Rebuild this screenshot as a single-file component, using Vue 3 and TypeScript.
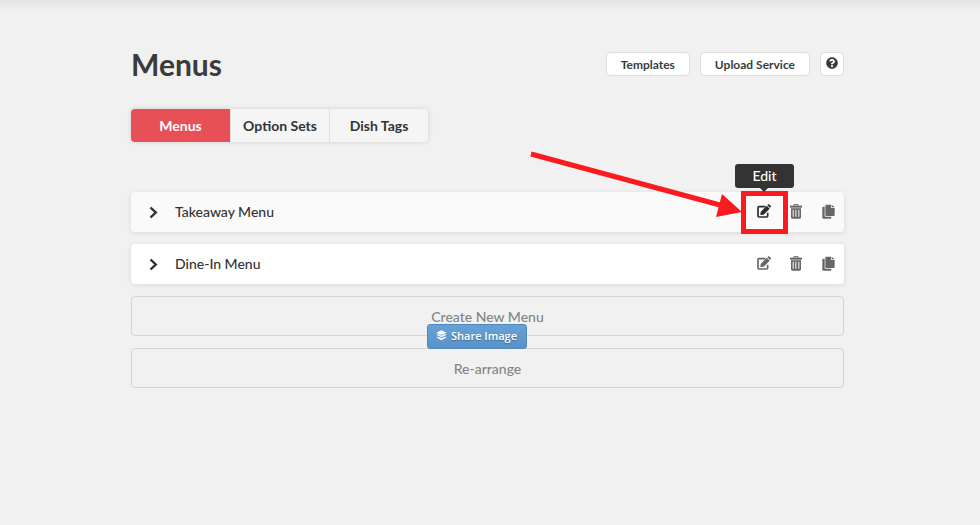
<script setup lang="ts">
import { ref } from 'vue'

interface Menu {
  id: number
  name: string
  active: boolean
}

const tabs: string[] = ['Menus', 'Option Sets', 'Dish Tags']
const currentTab = ref('Menus')
const menus: Menu[] = [
  { id: 1, name: 'Takeaway Menu', active: true },
  { id: 2, name: 'Dine-In Menu', active: false },
]
</script>

<template>
  <main class="page">
    <header class="header">
      <h1>Menus</h1>
      <div class="header-actions">
        <button class="small-button" type="button">Templates</button>
        <button class="small-button" type="button">Upload Service</button>
        <button class="small-button help" type="button" aria-label="Help">
          <svg viewBox="0 0 512 512" width="12" height="12" aria-hidden="true">
            <path fill="currentColor" d="M504 256c0 136.997-111.043 248-248 248S8 392.997 8 256C8 119.083 119.043 8 256 8s248 111.083 248 248zM262.655 90c-54.497 0-89.255 22.957-116.549 63.758-3.536 5.286-2.353 12.415 2.715 16.258l34.699 26.31c5.205 3.947 12.621 3.008 16.665-2.122 17.864-22.658 30.113-35.797 57.303-35.797 20.429 0 45.698 13.148 45.698 32.958 0 14.976-12.363 22.667-32.534 33.976C247.128 238.528 216 254.941 216 296v4c0 6.627 5.373 12 12 12h56c6.627 0 12-5.373 12-12v-1.333c0-28.462 83.186-29.647 83.186-106.667 0-58.002-60.165-102-116.531-102zM256 338c-25.365 0-46 20.635-46 46 0 25.364 20.635 46 46 46s46-20.636 46-46c0-25.365-20.635-46-46-46z" />
          </svg>
        </button>
      </div>
    </header>

    <nav class="tabs" aria-label="Sections">
      <button
        v-for="tab in tabs"
        :key="tab"
        class="tab"
        :class="{ selected: tab === currentTab }"
        type="button"
        @click="currentTab = tab"
      >{{ tab }}</button>
    </nav>

    <ul class="menu-list">
      <li v-for="menu in menus" :key="menu.id" class="menu-row" :class="{ active: menu.active }">
        <button class="expand" type="button" :aria-label="`Expand ${menu.name}`">
          <svg viewBox="0 0 9 13" width="9" height="13" aria-hidden="true">
            <path d="M1.5 1.5 6.8 6.5 1.5 11.5" fill="none" stroke="currentColor" stroke-width="2.4" />
          </svg>
        </button>
        <span class="menu-name">{{ menu.name }}</span>
        <div class="row-actions">
          <button class="icon-button edit" type="button" aria-label="Edit">
            <svg viewBox="0 0 42 42" width="14" height="14" aria-hidden="true">
              <path d="M25 8H6Q3 8 3 11V36Q3 39 6 39H29Q32 39 32 36V26" fill="none" stroke="currentColor" stroke-width="5" />
              <path d="M11 24 29 5 38 14 20 32 10 33Z M31 4 34 1Q36 0 38 2L41 5Q43 7 41 9L39 12Z" fill="currentColor" />
            </svg>
          </button>
          <button class="icon-button" type="button" aria-label="Delete">
            <svg viewBox="0 0 36 45" width="12" height="15" aria-hidden="true">
              <path d="M12 6V2H24V6" fill="none" stroke="currentColor" stroke-width="3" />
              <path d="M0 5H36V11H0Z" fill="currentColor" />
              <path fill-rule="evenodd" d="M3 13H33V40Q33 44 29 44H7Q3 44 3 40Z M8 17V38H11V17Z M16 17V38H19V17Z M25 17V38H28V17Z" fill="currentColor" />
            </svg>
          </button>
          <button class="icon-button" type="button" aria-label="Duplicate">
            <svg viewBox="0 0 39 45" width="13" height="15" aria-hidden="true">
              <path d="M8 8V35Q8 38 11 38H28V41Q28 44 25 44H4Q1 44 1 41V11Q1 8 4 8Z" fill="currentColor" />
              <path d="M13 2H27V12H38V33Q38 36 35 36H13Q10 36 10 33V5Q10 2 13 2Z M29 2 38 10H29Z" fill="currentColor" />
            </svg>
          </button>
        </div>
        <template v-if="menu.active">
          <span class="highlight"></span>
          <span class="tooltip" role="tooltip">Edit</span>
          <svg class="arrow" viewBox="0 0 214 70" width="214" height="70" aria-hidden="true">
            <path d="M3 7 192 58" stroke="#fb1b1e" stroke-width="5" />
            <path d="M194 47 214 65 188 70Z" fill="#fb1b1e" />
          </svg>
        </template>
      </li>
    </ul>

    <div class="list-actions">
      <button class="outline-button" type="button">Create New Menu</button>
      <button class="outline-button" type="button">Re-arrange</button>
      <button class="share" type="button">
        <svg viewBox="0 0 33 33" width="11" height="11" aria-hidden="true">
          <path d="M16 1 32 8 16 15 1 8Z M1 14 6 12 16 17 27 12 32 14 16 22Z M1 22 6 20 16 25 27 20 32 22 16 31Z" fill="currentColor" />
        </svg>
        Share Image
      </button>
    </div>
  </main>
</template>

<style>
body {
  background: #f1f1f1;
}
</style>

<style scoped>
.page {
  box-sizing: border-box;
  min-height: 100vh;
  padding: 45px 136px 40px 131px;
  background: linear-gradient(#e5e5e5, #f1f1f1 13px);
  color: #3b3b3b;
  font-family: Lato, "Liberation Sans", sans-serif;
}

button {
  box-sizing: border-box;
  margin: 0;
  padding: 0;
  border: 0;
  background: none;
  color: inherit;
  font: inherit;
  cursor: pointer;
}

svg {
  display: block;
}

.header {
  display: flex;
  justify-content: space-between;
  align-items: flex-start;
}

h1 {
  margin: 0;
  font-size: 30px;
  line-height: 38px;
  font-weight: 700;
}

.header-actions {
  display: flex;
  gap: 10px;
  padding-top: 7px;
}

.small-button {
  height: 24px;
  padding: 0 14px;
  border: 1px solid #dedede;
  border-radius: 4px;
  background: #fff;
  font-size: 12px;
  font-weight: 700;
}

.help {
  display: grid;
  place-items: center;
  width: 24px;
  padding: 0 0 2px;
}

.tabs {
  display: flex;
  width: fit-content;
  margin-top: 26px;
  border-radius: 4px;
  box-shadow: 0 0 5px rgba(0, 0, 0, 0.14);
}

.tab {
  width: 99px;
  height: 33px;
  border-left: 1px solid #e0e0e0;
  background: #f5f5f5;
  color: #333;
  font-size: 14px;
  font-weight: 700;
}

.tab:first-child {
  border-left: 0;
  border-radius: 4px 0 0 4px;
}

.tab:last-child {
  border-radius: 0 4px 4px 0;
}

.tab.selected {
  background: #e85058;
  color: #fff;
}

.menu-list {
  display: grid;
  gap: 12px;
  margin: 50px 0 0;
  padding: 0;
  list-style: none;
}

.menu-row {
  position: relative;
  display: flex;
  align-items: center;
  box-sizing: border-box;
  height: 40px;
  padding: 0 9px 0 18px;
  border-radius: 4px;
  background: #fff;
  box-shadow: 0 1px 5px rgba(0, 0, 0, 0.1);
}

.menu-row.active {
  background: #fafafa;
}

.expand {
  display: flex;
  width: 26px;
  color: #2e2e2e;
}

.menu-name {
  color: #333;
  font-size: 14px;
  font-weight: 500;
  line-height: 20px;
}

.row-actions {
  display: flex;
  gap: 18px;
  margin-left: auto;
  padding-bottom: 2px;
}

.icon-button {
  display: grid;
  place-items: center;
  width: 14px;
  height: 16px;
  color: #666;
}

.menu-row.active .edit {
  color: #2b2b2b;
}

.highlight {
  position: absolute;
  top: -1px;
  right: 56px;
  box-sizing: border-box;
  width: 47px;
  height: 43px;
  border: 5px solid #fb1b1e;
}

.tooltip {
  position: absolute;
  top: -28px;
  right: 50px;
  width: 59px;
  border-radius: 3px;
  background: #333;
  color: #fff;
  font-size: 14px;
  font-weight: 500;
  line-height: 24px;
  text-align: center;
}

.tooltip::after {
  content: "";
  position: absolute;
  top: 24px;
  left: 25px;
  border: 4px solid transparent;
  border-top-color: #333;
  border-bottom: 0;
}

.arrow {
  position: absolute;
  top: -45px;
  right: 102px;
}

.list-actions {
  position: relative;
  display: grid;
  gap: 12px;
  margin-top: 12px;
}

.outline-button {
  height: 40px;
  border: 1px solid #d3d3d3;
  border-radius: 4px;
  color: #858585;
  font-size: 14px;
  font-weight: 500;
}

.share {
  position: absolute;
  top: 28px;
  left: calc(50% - 61px);
  display: flex;
  align-items: center;
  justify-content: center;
  gap: 4px;
  width: 100px;
  height: 25px;
  padding-bottom: 2px;
  border: 1px solid #5089bd;
  border-radius: 3px;
  background: linear-gradient(#66a1d4, #5a92c9);
  color: #fff;
  font-family: "Open Sans", sans-serif;
  font-size: 11px;
  font-weight: 600;
  text-shadow: 0 1px 1px rgba(0, 0, 0, 0.3);
  white-space: nowrap;
}
</style>
